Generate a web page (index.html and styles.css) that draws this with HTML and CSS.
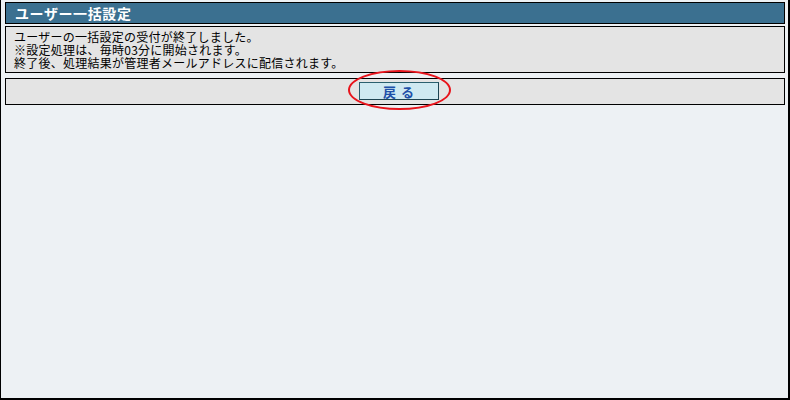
FILE: index.html
```html
<!DOCTYPE html>
<html lang="ja">
<head>
    <meta charset="UTF-8">
    <title>ユーザー一括設定</title>
    <link rel="stylesheet" href="styles.css">
</head>
<body>
    <div class="frame">
        <div class="title-bar">ユーザー一括設定</div>
        <div class="message-box">
            <div class="line">ユーザーの一括設定の受付が終了しました。</div>
            <div class="line">※設定処理は、毎時03分に開始されます。</div>
            <div class="line">終了後、処理結果が管理者メールアドレスに配信されます。</div>
        </div>
        <div class="button-box">
            <span class="button-wrap">
                <button class="back-button">戻 る</button>
                <span class="highlight"></span>
            </span>
        </div>
    </div>
</body>
</html>
```

FILE: styles.css
```css
:root {
    --page-bg: #edf1f4;
    --title-bg: #3b7090;
    --box-bg: #e4e4e4;
    --button-bg: #cfe9f1;
    --button-text: #2050a8;
}

html, body {
    margin: 0;
    padding: 0;
}

body {
    font-family: "Noto Sans CJK JP", "DejaVu Sans", sans-serif;
    font-size: 12px;
    color: #000;
    background-color: var(--page-bg);
}

.frame {
    box-sizing: border-box;
    width: 790px;
    height: 400px;
    padding: 2px 3px 0 4px;
    border-left: 1px solid #000;
    border-right: 2px solid #000;
    border-bottom: 2px solid #000;
    background-color: var(--page-bg);
}

.title-bar {
    box-sizing: border-box;
    height: 22px;
    padding: 1px 0 0 9px;
    border: 1px solid #000;
    background-color: var(--title-bg);
    color: #fff;
    font-size: 14px;
    font-weight: bold;
    letter-spacing: 0.6px;
    line-height: 18px;
}

.message-box {
    box-sizing: border-box;
    height: 47px;
    margin-top: 2px;
    padding: 3px 8px 2px;
    border: 1px solid #000;
    background-color: var(--box-bg);
    letter-spacing: 0.25px;
}

.line {
    height: 13px;
    line-height: 13px;
}

.button-box {
    box-sizing: border-box;
    height: 27px;
    margin-top: 5px;
    padding-top: 3px;
    border: 1px solid #000;
    background-color: var(--box-bg);
    text-align: center;
}

.button-wrap {
    position: relative;
    display: inline-block;
    margin-left: 8px;
}

.back-button {
    display: block;
    box-sizing: border-box;
    width: 80px;
    height: 18px;
    padding: 0;
    border: 1px solid #2a5f6e;
    border-right-color: #1d4452;
    border-bottom-color: #1d4452;
    background-color: var(--button-bg);
    color: var(--button-text);
    font-family: "Noto Sans CJK JP", sans-serif;
    font-size: 13px;
    font-weight: bold;
    letter-spacing: 1px;
    line-height: 15px;
}

.highlight {
    position: absolute;
    left: -11px;
    top: -12px;
    width: 99px;
    height: 36px;
    border: 2px solid #e8141c;
    border-radius: 50%;
    pointer-events: none;
}
```
